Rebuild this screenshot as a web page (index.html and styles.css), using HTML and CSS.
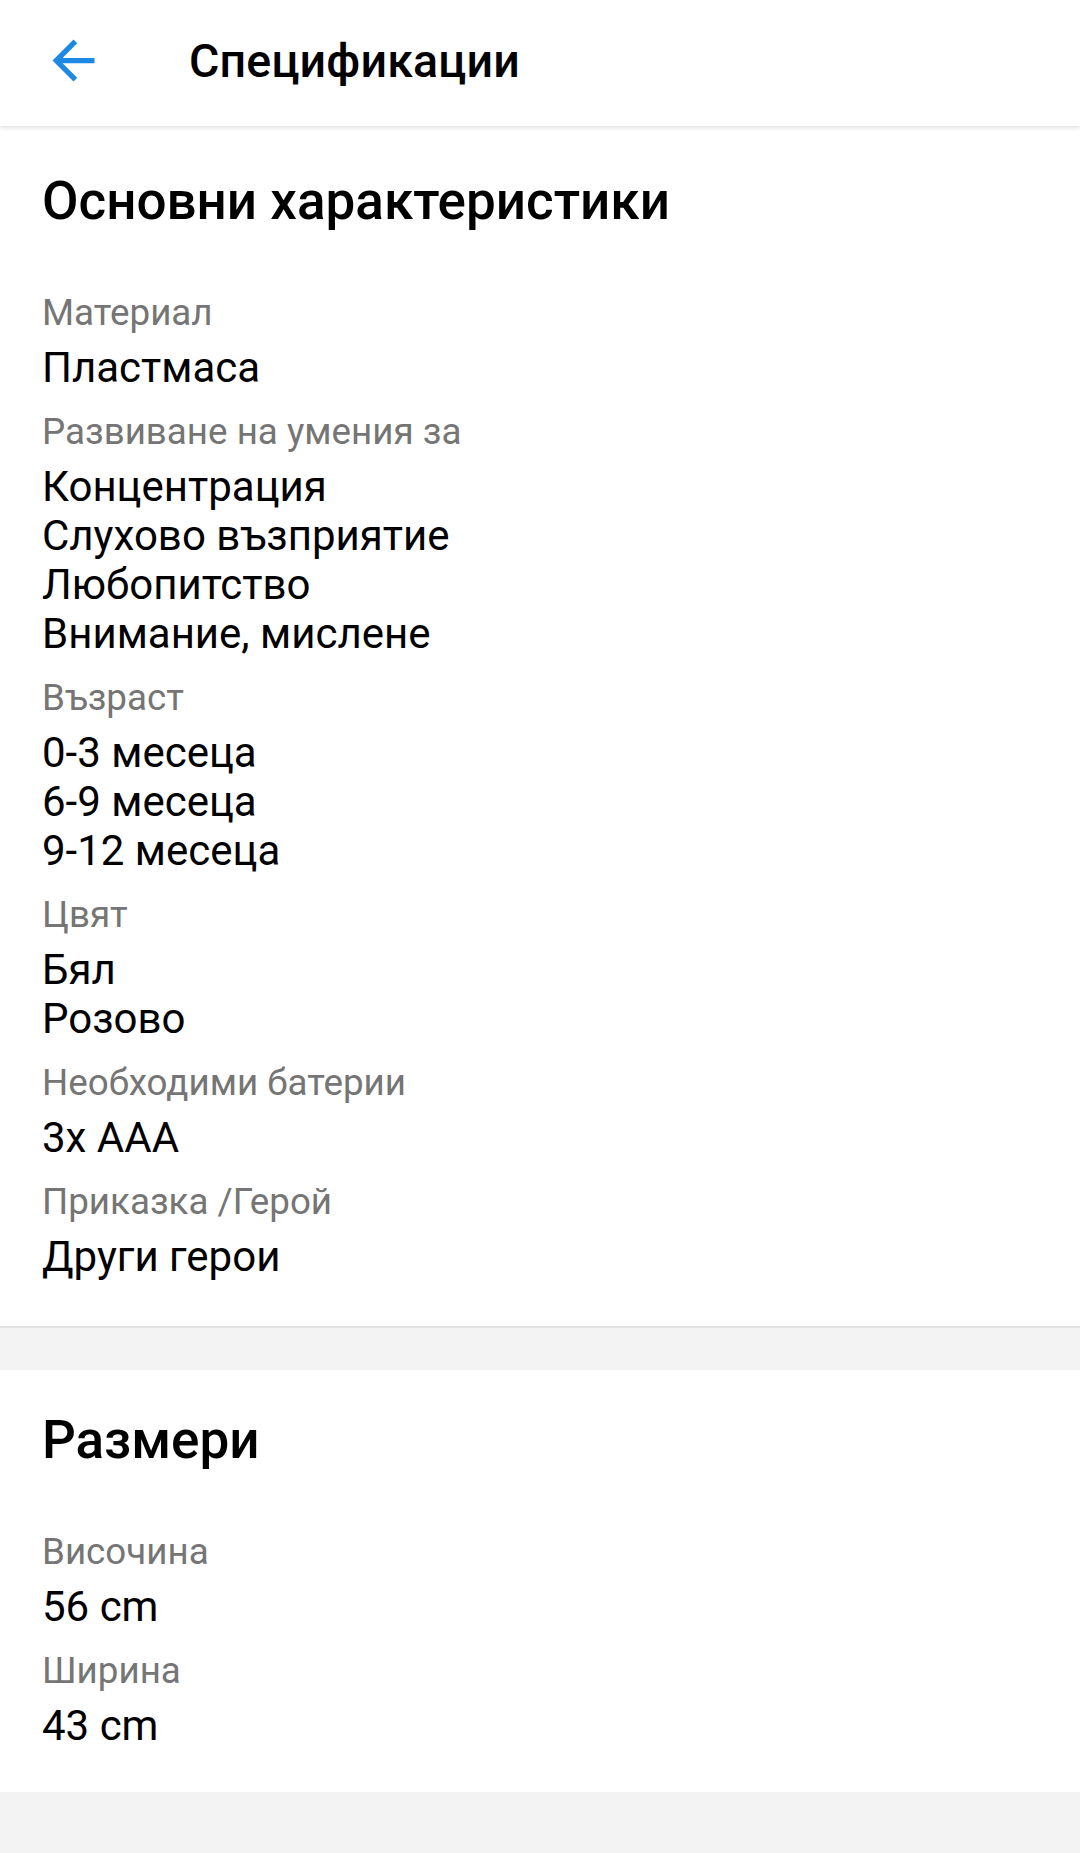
FILE: index.html
```html
<!DOCTYPE html>
<html lang="bg">
<head>
<meta charset="utf-8">
<title>Спецификации</title>
<link rel="stylesheet" href="styles.css">
</head>
<body>
<header class="toolbar">
  <span class="back">
    <svg viewBox="0 0 24 24" width="63" height="63"><path d="M20 11H7.83l5.59-5.59L12 4l-8 8 8 8 1.41-1.41L7.83 13H20v-2z" fill="#1E88E5"/></svg>
  </span>
  <h1 class="title">Спецификации</h1>
</header>
<main>
  <section class="card card-first">
    <h2 class="heading">Основни характеристики</h2>
    <dl class="specs">
      <div class="spec"><dt>Материал</dt><dd>Пластмаса</dd></div>
      <div class="spec"><dt>Развиване на умения за</dt><dd>Концентрация<br>Слухово възприятие<br>Любопитство<br>Внимание, мислене</dd></div>
      <div class="spec"><dt>Възраст</dt><dd>0-3 месеца<br>6-9 месеца<br>9-12 месеца</dd></div>
      <div class="spec"><dt>Цвят</dt><dd>Бял<br>Розово</dd></div>
      <div class="spec"><dt>Необходими батерии</dt><dd>3x AAA</dd></div>
      <div class="spec"><dt>Приказка /Герой</dt><dd>Други герои</dd></div>
    </dl>
  </section>
  <section class="card card-second">
    <h2 class="heading">Размери</h2>
    <dl class="specs">
      <div class="spec"><dt>Височина</dt><dd>56 cm</dd></div>
      <div class="spec"><dt>Ширина</dt><dd>43 cm</dd></div>
    </dl>
  </section>
</main>
</body>
</html>
```

FILE: styles.css
```css
html, body {
  margin: 0;
  padding: 0;
}
body {
  background: #f3f3f3;
  font-family: Roboto, "Noto Sans", "Liberation Sans", sans-serif;
  color: #000;
  min-height: 1853px;
}
.toolbar {
  height: 121px;
  padding-bottom: 5px;
  background: #fff;
  display: flex;
  align-items: center;
  padding-left: 42px;
  box-shadow: 0 2px 4px rgba(0,0,0,0.12);
  position: relative;
  z-index: 1;
}
.back {
  width: 63px;
  height: 63px;
  display: flex;
}
.title {
  margin: 0 0 0 84px;
  font-size: 46.5px;
  font-weight: 500;
  letter-spacing: 0.2px;
}
.card {
  background: #fff;
  padding: 42px 42px 42px;
}
.card-first {
  padding-top: 44px;
  padding-bottom: 45px;
  border-bottom: 2px solid #e2e2e2;
  margin-bottom: 42px;
}
.card-second {
  padding-top: 39px;
}
.heading {
  margin: 0;
  font-size: 53px;
  font-weight: 500;
  line-height: 62px;
}
.specs {
  margin: 60px 0 0;
  display: flex;
  flex-direction: column;
  gap: 19px;
}
.spec dt {
  font-size: 36.75px;
  line-height: 42px;
  color: #757575;
}
.spec dd {
  margin: 9px 0 0;
  font-size: 42px;
  line-height: 49px;
  color: #000;
}
```
